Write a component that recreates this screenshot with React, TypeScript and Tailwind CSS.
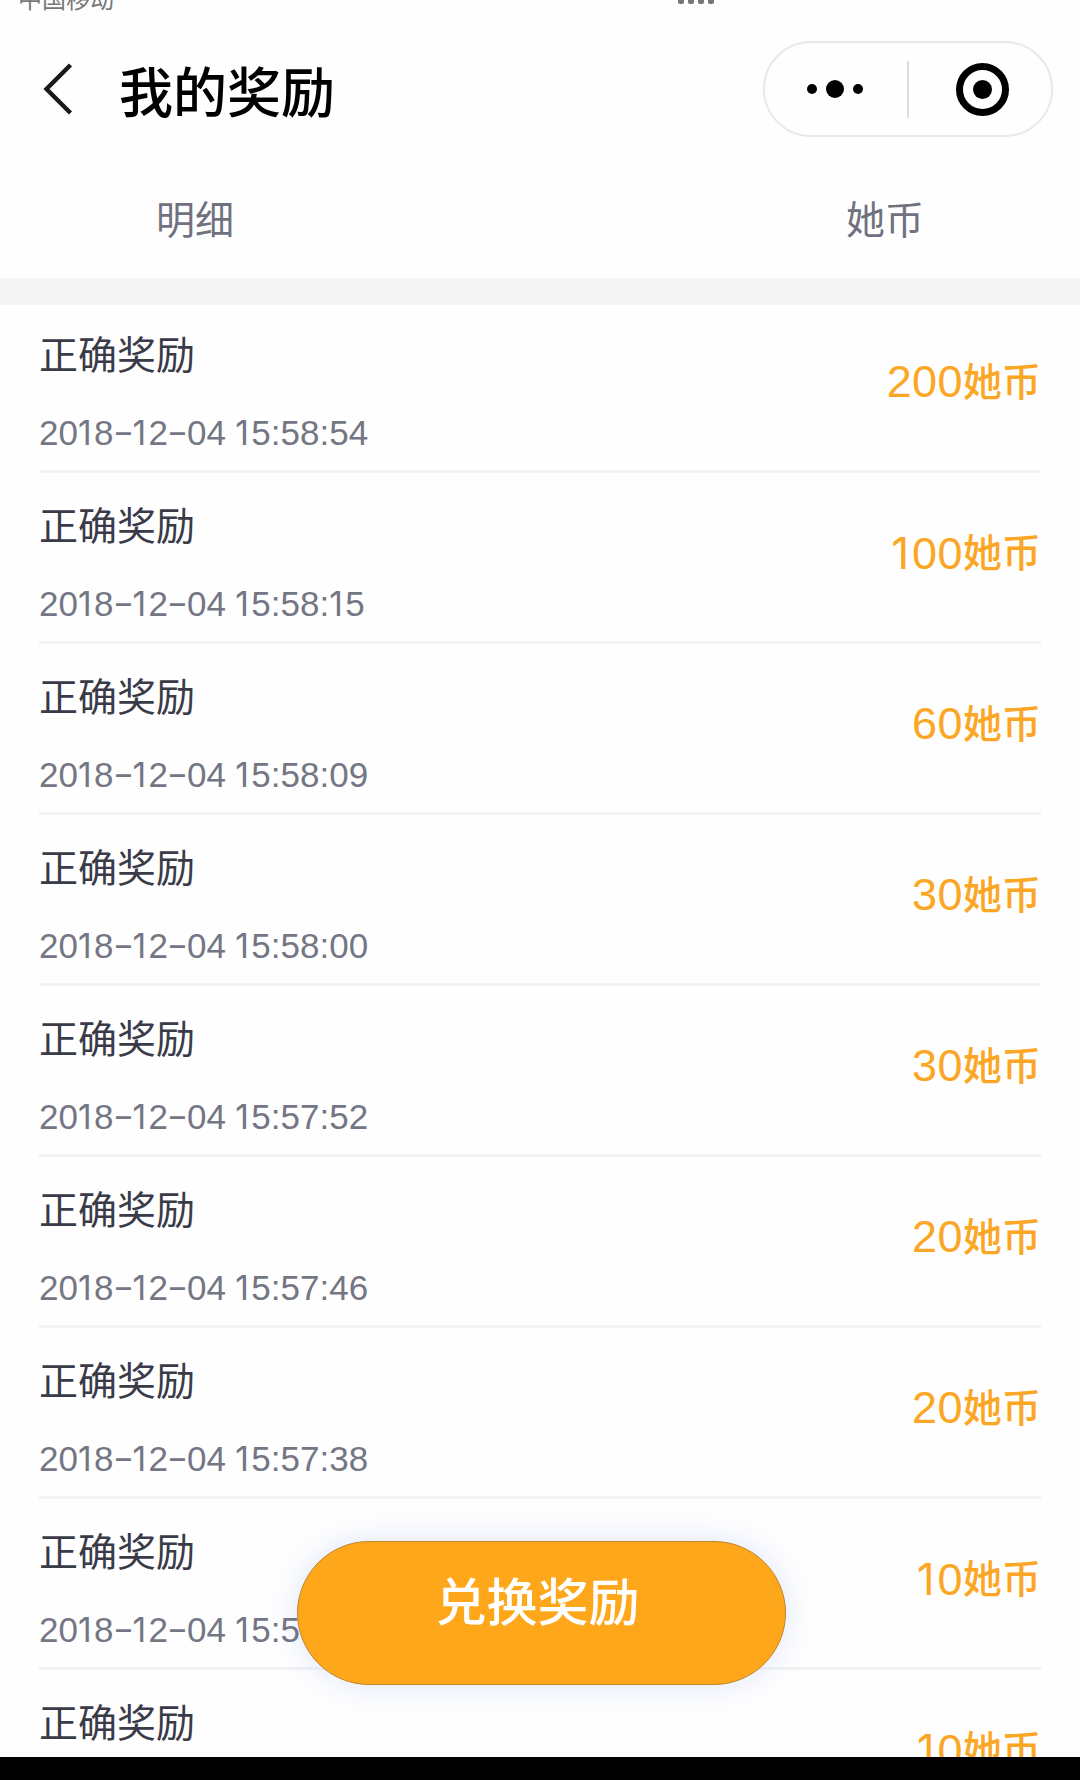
import React from "react";

//---------------------------------Interfaces---------------------------------
interface Reward {
  title: string;
  time: string;
  amount: number;
}

//---------------------------------Data---------------------------------
const rewards: Reward[] = [
  { title: "正确奖励", time: "2018-12-04 15:58:54", amount: 200 },
  { title: "正确奖励", time: "2018-12-04 15:58:15", amount: 100 },
  { title: "正确奖励", time: "2018-12-04 15:58:09", amount: 60 },
  { title: "正确奖励", time: "2018-12-04 15:58:00", amount: 30 },
  { title: "正确奖励", time: "2018-12-04 15:57:52", amount: 30 },
  { title: "正确奖励", time: "2018-12-04 15:57:46", amount: 20 },
  { title: "正确奖励", time: "2018-12-04 15:57:38", amount: 20 },
  { title: "正确奖励", time: "2018-12-04 15:57:30", amount: 10 },
  { title: "正确奖励", time: "2018-12-04 15:57:22", amount: 10 },
];

//---------------------------------Components---------------------------------
//Digits with a narrow "1" and a long dash
const Digits: React.FC<{ text: string }> = ({ text }) => (
  <>
    {text.split("").map((char, i) => {
      if (char === "1") {
        return (
          <span
            key={i}
            className="inline-block w-[0.479em] pr-[0.07em] text-center font-['Inter',sans-serif] text-[0.96em] tracking-normal"
          >
            1
          </span>
        );
      }
      if (char === "-") {
        return (
          <span
            key={i}
            className="inline-block w-[19px] -translate-y-[2px] scale-x-[1.75] text-center"
          >
            -
          </span>
        );
      }
      return char;
    })}
  </>
);

const StatusBar = () => (
  <div className="flex h-[13px] items-end overflow-hidden pl-[18px] text-[24px] leading-[26px] text-[#777777]">
    <span className="h-[26px]">中国移动</span>
    <div className="mb-[9px] ml-auto mr-[366px] flex gap-[4px]">
      <i className="h-[6px] w-[6px] rounded-b-[2px] bg-[#777777]" />
      <i className="h-[6px] w-[6px] rounded-b-[2px] bg-[#777777]" />
      <i className="h-[6px] w-[6px] rounded-b-[2px] bg-[#777777]" />
      <i className="h-[6px] w-[6px] rounded-b-[2px] bg-[#777777]" />
    </div>
  </div>
);

const NavBar = () => (
  <header className="flex h-[152px] items-center pl-[42px] pr-[27px]">
    <svg width="34" height="56" viewBox="0 0 34 56" fill="none" className="block">
      <path d="M28.5 4 L4.5 28 L28.5 52" stroke="#1a1a1a" strokeWidth="4.4" />
    </svg>
    <h1 className="ml-[43px] pt-[9px] text-[54px] font-medium leading-[72px] text-black">
      我的奖励
    </h1>
    <div className="ml-auto flex h-[96px] w-[290px] items-center rounded-full border-2 border-[#e9e9e9]">
      <div className="flex w-[142px] items-center justify-center gap-[9px] pr-[3px]">
        <i className="h-[10px] w-[10px] rounded-full bg-black" />
        <i className="h-[18px] w-[18px] rounded-full bg-black" />
        <i className="h-[10px] w-[10px] rounded-full bg-black" />
      </div>
      <i className="h-[57px] w-[2px] bg-[#dddddd]" />
      <div className="flex flex-1 justify-center pl-[4px]">
        <div className="flex h-[53px] w-[53px] items-center justify-center rounded-full border-7 border-black">
          <i className="h-[19px] w-[19px] rounded-full bg-black" />
        </div>
      </div>
    </div>
  </header>
);

const RewardRow: React.FC<{ reward: Reward }> = ({ reward }) => (
  <li className="flex h-[171px] shrink-0 justify-between border-b-3 border-[#f3f3f4]">
    <div>
      <p className="mt-[26px] text-[39px] leading-[56px] text-[#3a3b48]">{reward.title}</p>
      <p className="mt-[27px] text-[35px] leading-[44px] text-[#747684] [word-spacing:-0.5px]">
        <Digits text={reward.time} />
      </p>
    </div>
    <p className="mt-[50px] flex h-[60px] text-[39px] leading-[60px] text-[#fba624]">
      <span className="text-[45px] tracking-[0.4px]">
        <Digits text={String(reward.amount)} />
      </span>
      <span className="mt-px font-medium">她币</span>
    </p>
  </li>
);

//---------------------------------UI---------------------------------
const App = () => {
  return (
    <div className="relative flex h-[1780px] w-[1080px] flex-col overflow-hidden bg-[#fefefe] font-['Liberation_Sans','Noto_Sans_CJK_SC',sans-serif]">
      <StatusBar />
      <NavBar />
      <div className="flex h-[113px] items-center justify-between px-[156px] text-[39px] text-[#6f717f]">
        <span>明细</span>
        <span>她币</span>
      </div>
      <div className="-mb-[3px] h-[27px] shrink-0 bg-[#f4f4f4]" />
      <ul className="flex min-h-0 flex-1 flex-col overflow-hidden px-[39px]">
        {rewards.map((reward) => (
          <RewardRow key={reward.time} reward={reward} />
        ))}
      </ul>
      <div className="h-[23px] shrink-0 bg-black" />

      {/* Floating action */}
      <button className="absolute left-[297px] top-[1541px] h-[144px] w-[489px] rounded-full border border-[#c0862a] bg-[#ffa71b] pb-[18px] pr-[8px] text-[51px] font-medium leading-[72px] text-white shadow-[0_0_32px_rgba(70,110,240,0.16)]">
        兑换奖励
      </button>
    </div>
  );
};

export default App;
